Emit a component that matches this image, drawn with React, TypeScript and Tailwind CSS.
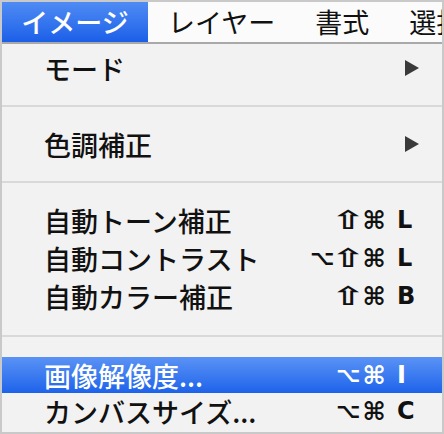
import React from 'react';

type Item =
  | {kind: 'item'; label: string; mods?: string[]; keyChar?: string; submenu?: boolean; active?: boolean; h: string}
  | {kind: 'sep'; h: string};

const items: Item[] = [
  {kind: 'item', label: 'モード', submenu: true, h: 'h-[38px]'},
  {kind: 'sep', h: 'h-[38px]'},
  {kind: 'item', label: '色調補正', submenu: true, h: 'h-[38px]'},
  {kind: 'sep', h: 'h-[38px]'},
  {kind: 'item', label: '自動トーン補正', mods: ['⇧', '⌘'], keyChar: 'L', h: 'h-[38px]'},
  {kind: 'item', label: '自動コントラスト', mods: ['⌥', '⇧', '⌘'], keyChar: 'L', h: 'h-[38px]'},
  {kind: 'item', label: '自動カラー補正', mods: ['⇧', '⌘'], keyChar: 'B', h: 'h-[38px]'},
  {kind: 'sep', h: 'h-[42px]'},
  {kind: 'item', label: '画像解像度...', mods: ['⌥', '⌘'], keyChar: 'I', active: true, h: 'h-[36px]'},
  {kind: 'item', label: 'カンバスサイズ...', mods: ['⌥', '⌘'], keyChar: 'C', h: 'h-[36px]'},
];

const menuBar = ['レイヤー', '書式', '選択'];

const modClass: Record<string, string> = {
  '⌥': 'text-[21px]',
  '⇧': 'text-[26px] scale-x-[1.6]',
  '⌘': 'text-[25px]',
};

function SubmenuArrow() {
  return (
    <svg width="14" height="16" viewBox="0 0 14 16" aria-hidden>
      <polygon points="0,0 14,8 0,16" fill="#3a3a3a" />
    </svg>
  );
}

export default function App() {
  return (
    <div className="flex h-[434px] w-[444px] flex-col overflow-hidden border-2 border-[#c9c9c9] bg-[#f2f2f2] font-['Noto_Sans_CJK_JP','Noto_Sans',sans-serif] text-[27px] font-medium leading-none text-[#111]">
      <div className="flex h-[42px] shrink-0 items-stretch overflow-hidden border-b-2 border-[#a9a9a9] bg-[#fbfbfb]">
        <div className="flex w-[146px] shrink-0 items-center justify-center whitespace-nowrap bg-linear-to-b from-[#4f8bf4] to-[#1b5fe8] pb-[2px] text-white">
          イメージ
        </div>
        {menuBar.map((m) => (
          <div key={m} className="flex shrink-0 items-center whitespace-nowrap px-[20px] pb-[2px] font-normal">
            {m}
          </div>
        ))}
      </div>

      <div className="flex flex-col pt-[5px]">
        {items.map((it, i) =>
          it.kind === 'sep' ? (
            <div key={i} className={`flex items-center ${it.h}`}>
              <div className="h-[2px] w-full bg-[#d9d9d9]" />
            </div>
          ) : (
            <div
              key={i}
              className={`flex items-center pl-[42px] pr-[23px] ${it.h} ${
                it.active ? 'bg-linear-to-b from-[#5a92f5] to-[#1c62ea] text-white' : ''
              }`}
            >
              <span className="flex-1 whitespace-nowrap">{it.label}</span>
              {it.submenu && <SubmenuArrow />}
              {it.keyChar && (
                <span className="flex items-center font-['DejaVu_Sans',sans-serif] font-bold">
                  {it.mods?.map((m, j) => (
                    <span key={j} className="flex w-[26px] justify-center">
                      <span className={`inline-block ${modClass[m]}`}>{m}</span>
                    </span>
                  ))}
                  <span className="ml-[10px] w-[22px] text-left text-[24px]">{it.keyChar}</span>
                </span>
              )}
            </div>
          ),
        )}
      </div>
    </div>
  );
}
